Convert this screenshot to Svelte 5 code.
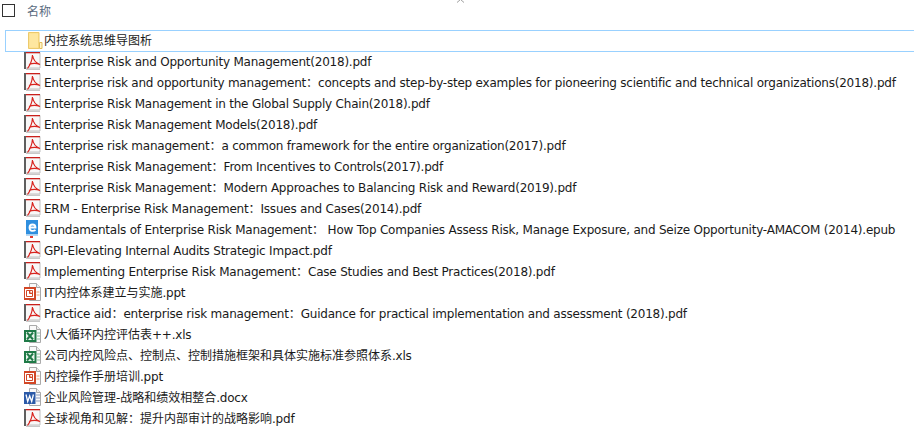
<script>
  const files = [
    ['folder', '内控系统思维导图析'],
    ['pdf', 'Enterprise Risk and Opportunity Management(2018).pdf'],
    ['pdf', 'Enterprise risk and opportunity management：concepts and step-by-step examples for pioneering scientific and technical organizations(2018).pdf'],
    ['pdf', 'Enterprise Risk Management in the Global Supply Chain(2018).pdf'],
    ['pdf', 'Enterprise Risk Management Models(2018).pdf'],
    ['pdf', 'Enterprise risk management：a common framework for the entire organization(2017).pdf'],
    ['pdf', 'Enterprise Risk Management：From Incentives to Controls(2017).pdf'],
    ['pdf', 'Enterprise Risk Management：Modern Approaches to Balancing Risk and Reward(2019).pdf'],
    ['pdf', 'ERM - Enterprise Risk Management：Issues and Cases(2014).pdf'],
    ['epub', 'Fundamentals of Enterprise Risk Management： How Top Companies Assess Risk, Manage Exposure, and Seize Opportunity-AMACOM (2014).epub'],
    ['pdf', 'GPI-Elevating Internal Audits Strategic Impact.pdf'],
    ['pdf', 'Implementing Enterprise Risk Management：Case Studies and Best Practices(2018).pdf'],
    ['ppt', 'IT内控体系建立与实施.ppt'],
    ['pdf', 'Practice aid：enterprise risk management：Guidance for practical implementation and assessment (2018).pdf'],
    ['xls', '八大循环内控评估表++.xls'],
    ['xls', '公司内控风险点、控制点、控制措施框架和具体实施标准参照体系.xls'],
    ['ppt', '内控操作手册培训.ppt'],
    ['doc', '企业风险管理-战略和绩效相整合.docx'],
    ['pdf', '全球视角和见解：提升内部审计的战略影响.pdf']
  ];

  // latin runs get their own tracking, CJK runs stay on the 12px grid
  function runs(name) {
    return name.match(/[\u3000-\u9fff\uff00-\uffef]+|[^\u3000-\u9fff\uff00-\uffef]+/g);
  }
  const isCjk = (s) => /[\u3000-\u9fff\uff00-\uffef]/.test(s);
</script>

<div class="page">
  <svg class="sort" width="8" height="3" viewBox="0 0 8 3">
    <path d="M0 2.500l3.500-3 3.500 3" fill="none" stroke="#a0a0a0" />
  </svg>
  <div class="header">
    <span class="check"></span>
    <span class="title">名称</span>
  </div>
  <ul class="list">
    {#each files as [kind, name], i}
      <li class="row" class:selected={i === 0}>
        <svg class="icon" width="20" height="20" viewBox="0 0 20 20">
          {#if kind === 'folder'}
            <path d="M4.500 1.500h10.500v16H4.500z" fill="#fde08a" stroke="#ecca6c" />
            <path d="M5.500 2.500h8.500v14H5.500z" fill="#fee7a0" />
            <path d="M15.500 11.500h2.500v6h-2.500z" fill="#fff4c8" stroke="#e3bf5c" />
          {:else if kind === 'pdf'}
            <path d="M0.500 1.500h15.500v15.500H0.500z" fill="#f8f8f8" stroke="#c0c0c0" />
            <path d="M0 1h2v17H0z" fill="#5e5e5e" />
            <path d="M2 17.500h14v1.500H2z" fill="#c8c8c8" />
            <path d="M2 1h14v1.300H2z" fill="#c9201c" />
            <path d="M8.500 4c-.3 4.500-2 9.500-5 13.500M8.500 4c.5 4 3.500 8 7.500 9.500M5 13.500c3.500-1.500 7.500-1.500 11 0" fill="none" stroke="#d8241f" stroke-width="1.200" />
          {:else if kind === 'epub'}
            <path d="M2 1h12v14.500H2z" fill="#2f8fdf" />
            <path d="M2 15.500h12v1.500H2z" fill="#b8d8f2" />
            <path d="M6 17h3v2H6z" fill="#e03a30" />
            <path d="M5 8.500h6.500c0-4-6-4-6 0s4 4 6 2.500" fill="none" stroke="#fff" stroke-width="1.800" />
          {:else if kind === 'ppt'}
            <path d="M5.500 1.500h7l4 4v13h-11z" fill="#fafafa" stroke="#aaa" />
            <path d="M12.500 1.500v4h4" fill="#eee" stroke="#aaa" />
            <path d="M12.500 10h3M12.500 13h3" stroke="#f0a070" />
            <path d="M0 6h11v11H0z" fill="#fff" stroke="#d24726" stroke-width="2" />
            <path d="M2.500 8.500h6v6h-6z" fill="none" stroke="#d24726" />
            <path d="M5.500 8.500v3h3" fill="#f09070" stroke="#d24726" />
          {:else if kind === 'xls'}
            <path d="M5.500 1.500h7l4 4v13h-11z" fill="#fafafa" stroke="#aaa" />
            <path d="M12.500 1.500v4h4" fill="#eee" stroke="#aaa" />
            <path d="M13 9h3M13 12h3M13 15h3" stroke="#8cc0a0" />
            <path d="M0 6h12.500v12H0z" fill="#1f7a47" />
            <path d="M2 8h8.500v8H2z" fill="#e8f4ec" />
            <path d="M3 8.500l6 7M9 8.500l-6 7" stroke="#1f7a47" stroke-width="2" />
          {:else}
            <path d="M5.500 1.500h7l4 4v13h-11z" fill="#fafafa" stroke="#aaa" />
            <path d="M12.500 1.500v4h4" fill="#eee" stroke="#aaa" />
            <path d="M12 8h4M12 11h4M12 14h4" stroke="#8a9cc0" />
            <path d="M0 5h11.500v12H0z" fill="#2b5aa8" />
            <path d="M2 7.500l1.700 7 2-5.500 2 5.500 1.700-7" fill="none" stroke="#fff" stroke-width="1.300" />
          {/if}
        </svg>
        <span class="name">{#each runs(name) as run}<span class:latin={!isCjk(run)}>{run}</span>{/each}</span>
      </li>
    {/each}
  </ul>
</div>

<style>
  :global(body) {
    background: #fff;
  }

  .page {
    width: 914px;
    height: 440px;
    overflow: hidden;
    position: relative;
    font-family: "DejaVu Sans", "Noto Sans CJK SC", sans-serif;
    font-size: 12px;
    color: #1a1a1a;
  }

  .sort {
    position: absolute;
    left: 457px;
    top: 0;
  }

  .header {
    display: flex;
    align-items: center;
    height: 21px;
    padding-left: 2px;
  }

  .check {
    width: 11px;
    height: 11px;
    border: 1px solid #333;
  }

  .title {
    margin-left: 12px;
    color: #5a6b80;
  }

  .list {
    list-style: none;
    margin: 9px 0 0;
    padding: 0 0 0 5px;
  }

  .row {
    display: flex;
    align-items: flex-start;
    height: 21px;
    box-sizing: border-box;
    border-left: 1px solid transparent;
    padding-left: 18px;
  }

  .row.selected {
    height: 22px;
    margin-bottom: -1px;
    border: 1px solid #99d1ff;
    border-right: none;
  }

  .icon {
    flex: none;
  }

  .name {
    display: block;
    white-space: pre;
    height: 20px;
    line-height: 20px;
    margin-top: 1px;
  }

  .selected .name {
    margin-top: 0;
  }

  .latin {
    letter-spacing: -0.22px;
  }
</style>
